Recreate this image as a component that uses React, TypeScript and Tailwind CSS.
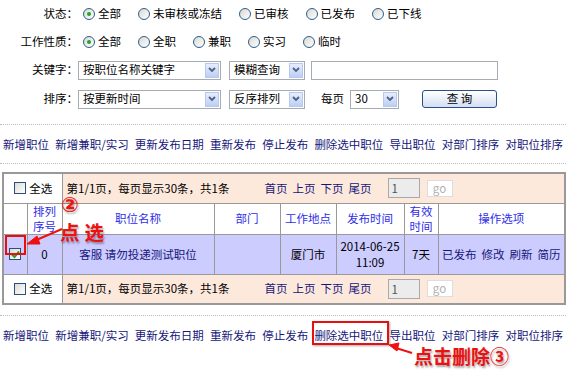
import React from "react";

// =============== Shared styles ===============
const FONT = { fontFamily: '"Noto Sans CJK SC", "Noto Sans", sans-serif' };
const LINKS = ["新增职位", "新增兼职/实习", "更新发布日期", "重新发布", "停止发布", "删除选中职位", "导出职位", "对部门排序", "对职位排序"];

// XP style radio
const Radio = ({ checked, label }: { checked?: boolean; label: string }) => (
    <span className="flex items-center gap-[3px]">
        <span className="flex items-center justify-center w-[12px] h-[12px] rounded-full border border-[#2c5e8e] bg-linear-to-br from-[#d8d8d2] to-white">
            {checked && <span className="w-[4px] h-[4px] rounded-full bg-[#25a525]" />}
        </span>
        <span>{label}</span>
    </span>
);

// XP style checkbox
const Check = ({ checked }: { checked?: boolean }) => (
    <span className="flex items-center justify-center w-[12px] h-[12px] border border-[#2c4e7a] bg-linear-to-br from-[#dcdcd6] to-white">
        {checked && (
            <svg width="9" height="9" viewBox="0 0 9 9">
                <path d="M1 4.5 L3.5 7 L8 1.5" stroke="#22a022" strokeWidth="2" fill="none" />
            </svg>
        )}
    </span>
);

// Select box with little blue dropdown button
const Select = ({ text, w }: { text: string; w: string }) => (
    <div className={`flex items-center justify-between h-[19px] border border-[#a5acb2] bg-white pl-[4px] pr-[1px] ${w}`}>
        <span>{text}</span>
        <span className="flex items-center justify-center w-[14px] h-[15px] border border-[#b7c9ee] bg-linear-to-b from-[#e6eefc] to-[#bccff3]">
            <svg width="8" height="6" viewBox="0 0 8 6">
                <path d="M1 1 L4 4 L7 1" stroke="#4d6185" strokeWidth="1.8" fill="none" />
            </svg>
        </span>
    </div>
);

const Dotted = () => <div className="border-t border-dotted border-[#bbb]" />;

const LinkBar = () => (
    <div className="flex justify-between items-center h-[38px] px-[3px] text-[#16167a] leading-[16px]">
        {LINKS.map((l) => (
            <span key={l}>{l}</span>
        ))}
    </div>
);

const Pager = () => (
    <tr className="h-[30px]">
        <td colSpan={2} className="border border-[#999] bg-white">
            <div className="flex items-center justify-center gap-[3px] pl-[1px]">
                <Check />
                <span>全选</span>
            </div>
        </td>
        <td colSpan={6} className="border border-[#999] bg-[#fde9dc] pl-[4px]">
            <div className="flex items-center">
                <span className="w-[198px]">第1/1页，每页显示30条，共1条</span>
                <span className="flex gap-[5px] text-[#16167a]">
                    <span>首页</span>
                    <span>上页</span>
                    <span>下页</span>
                    <span>尾页</span>
                </span>
                <span className="ml-[16px] w-[32px] h-[20px] border border-[#a9a9a9] bg-[#ececec] pl-[3px] leading-[18px] text-[#555]">1</span>
                <span className="ml-[7px] w-[26px] h-[17px] border border-[#ddd] bg-white text-center leading-[15px] text-[#b0b0b0]">go</span>
            </div>
        </td>
    </tr>
);

export default function App() {
    return (
        <div className="relative w-[566px] h-[378px] bg-white text-[11.5px] text-black overflow-hidden" style={FONT}>
            {/* =============== Search Form =============== */}
            <div className="flex items-center h-[27px]">
                <span className="w-[78px] text-right">状态：</span>
                <div className="flex items-center gap-[17px] ml-[5px]">
                    <Radio checked label="全部" />
                    <Radio label="未审核或冻结" />
                    <Radio label="已审核" />
                    <Radio label="已发布" />
                    <Radio label="已下线" />
                </div>
            </div>
            <div className="flex items-center h-[29px]">
                <span className="w-[78px] text-right">工作性质：</span>
                <div className="flex items-center gap-[17px] ml-[5px]">
                    <Radio checked label="全部" />
                    <Radio label="全职" />
                    <Radio label="兼职" />
                    <Radio label="实习" />
                    <Radio label="临时" />
                </div>
            </div>
            <div className="flex items-center h-[28px]">
                <span className="w-[78px] text-right">关键字：</span>
                <Select text="按职位名称关键字" w="w-[143px]" />
                <div className="ml-[8px]"><Select text="模糊查询" w="w-[76px]" /></div>
                <div className="ml-[6px] w-[187px] h-[19px] border border-[#a5acb2] bg-white" />
            </div>
            <div className="flex items-center h-[30px]">
                <span className="w-[78px] text-right">排序：</span>
                <Select text="按更新时间" w="w-[143px]" />
                <div className="ml-[8px]"><Select text="反序排列" w="w-[76px]" /></div>
                <span className="ml-[16px]">每页</span>
                <div className="ml-[6px]"><Select text="30" w="w-[49px]" /></div>
                <button className="ml-[23px] w-[75px] h-[18px] rounded-[3px] border border-[#2a4f86] bg-linear-to-b from-white to-[#d4dff3] text-[11.5px] leading-none">
                    查 询
                </button>
            </div>

            {/* =============== Action Links =============== */}
            <div className="mt-[10px]"><Dotted /></div>
            <LinkBar />
            <Dotted />

            {/* =============== Job Table =============== */}
            <table className="mt-[8px] ml-[2px] w-[562px] table-fixed border-collapse border-2 border-[#999]">
                <colgroup>
                    <col className="w-[24px]" />
                    <col className="w-[35px]" />
                    <col className="w-[152px]" />
                    <col className="w-[66px]" />
                    <col className="w-[56px]" />
                    <col className="w-[68px]" />
                    <col className="w-[34px]" />
                    <col className="w-[127px]" />
                </colgroup>
                <tbody>
                    <Pager />
                    <tr className="h-[31px] bg-white text-center text-[#2e2ee8] leading-[15px]">
                        <td className="border border-[#999]" />
                        <td className="border border-[#999]">排列<br />序号</td>
                        <td className="border border-[#999]">职位名称</td>
                        <td className="border border-[#999]">部门</td>
                        <td className="border border-[#999]">工作地点</td>
                        <td className="border border-[#999]">发布时间</td>
                        <td className="border border-[#999]">有效<br />时间</td>
                        <td className="border border-[#999]">操作选项</td>
                    </tr>
                    <tr className="h-[40px] bg-[#ccccff] text-center leading-[16px]">
                        <td className="border border-[#999]">
                            <div className="flex justify-center"><Check checked /></div>
                        </td>
                        <td className="border border-[#999]">0</td>
                        <td className="border border-[#999] text-[#16167a]">客服 请勿投递测试职位</td>
                        <td className="border border-[#999]" />
                        <td className="border border-[#999]">厦门市</td>
                        <td className="border border-[#999]">2014-06-25<br />11:09</td>
                        <td className="border border-[#999]">7天</td>
                        <td className="border border-[#999] text-[#16167a]">
                            <div className="flex justify-center gap-[5px]">
                                <span>已发布</span>
                                <span>修改</span>
                                <span>刷新</span>
                                <span>简历</span>
                            </div>
                        </td>
                    </tr>
                    <Pager />
                </tbody>
            </table>

            <div className="mt-[10px]"><Dotted /></div>
            <LinkBar />

            {/* =============== Annotations (overlay) =============== */}
            <div className="absolute left-[5px] top-[235px] w-[21px] h-[20px] border-2 border-[#e61010]" />
            <div className="absolute left-[312px] top-[321px] w-[77px] h-[24px] border-2 border-[#e61010] shadow-[1px_1px_2px_rgba(0,0,0,0.35)]" />
            <span className="absolute left-[61px] top-[195px] leading-[20px] text-[21px] font-bold text-[#ee1111] [text-shadow:1px_2px_2px_rgba(0,0,0,0.35)]" style={{ fontFamily: '"DejaVu Sans", sans-serif' }}>②</span>
            <div className="absolute left-[60px] top-[222px] flex gap-[5px] leading-[20px] text-[19.5px] font-bold text-[#ee1111] [text-shadow:1px_2px_2px_rgba(0,0,0,0.35)]">
                <span>点</span>
                <span>选</span>
            </div>
            <span className="absolute left-[414px] top-[346px] leading-[20px] text-[19px] font-bold text-[#ee1111] [text-shadow:1px_2px_2px_rgba(0,0,0,0.35)]">点击删除③</span>
            <svg className="absolute left-0 top-0 pointer-events-none" width="566" height="378" viewBox="0 0 566 378">
                <g fill="#ee1111" stroke="#ee1111" strokeWidth="2">
                    <line x1="62" y1="229" x2="34" y2="241" />
                    <polygon points="27,244 37,236 40,244" strokeWidth="1" />
                    <line x1="412" y1="353" x2="396" y2="348" />
                    <polygon points="389,345 399,343 397,351" strokeWidth="1" />
                </g>
            </svg>
        </div>
    );
}
